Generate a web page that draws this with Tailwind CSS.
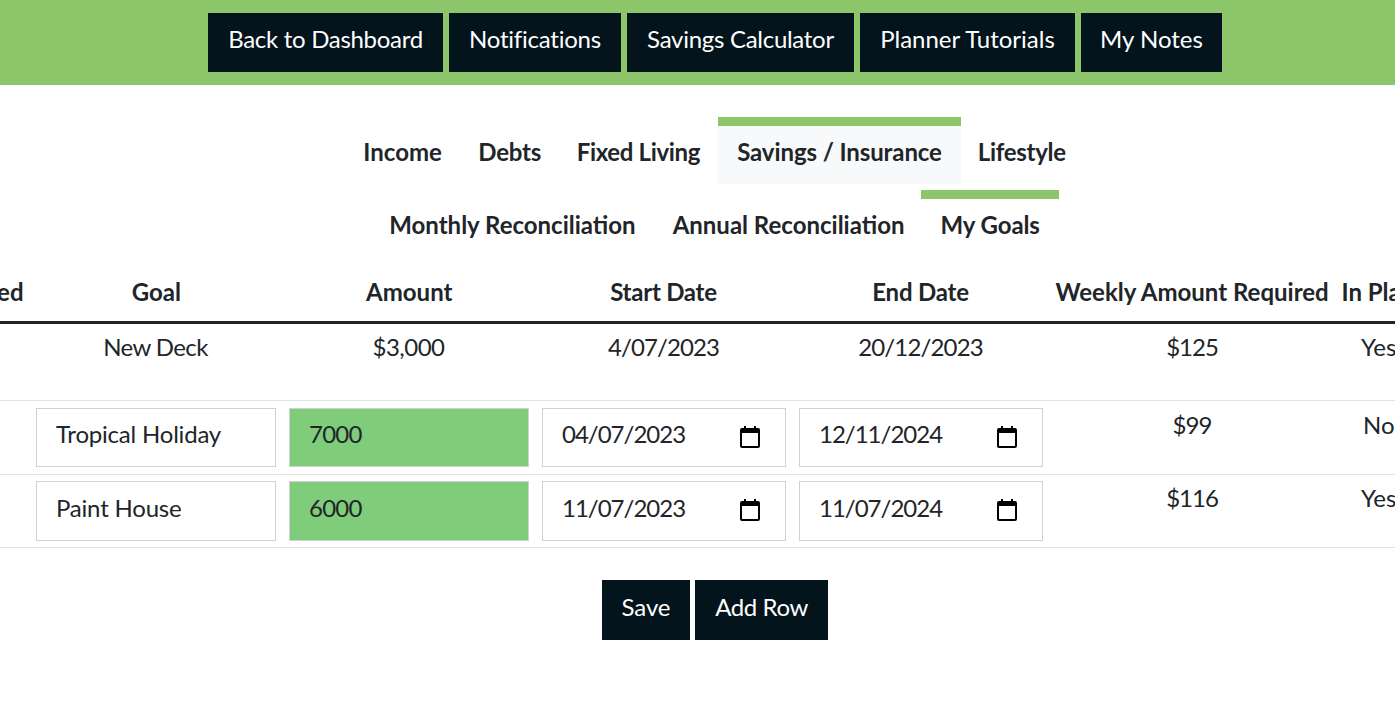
<!DOCTYPE html>
<html lang="en">
<head>
<meta charset="utf-8">
<title>My Goals</title>
<script src="https://cdn.jsdelivr.net/npm/@tailwindcss/browser@4"></script>
</head>
<body class="bg-white text-[#212529] font-['Lato',sans-serif] text-[24px] leading-[36px] overflow-hidden h-[706px] [font-variant-ligatures:common-ligatures]">
<nav class="bg-[#8cc56a] h-[85px] pt-[13px] pl-[35px] flex justify-center items-start gap-[6px]">
  <a class="bg-[#03141c] text-white h-[59px] w-[235px] pb-[7px] flex items-center justify-center tracking-[-0.3px]">Back to Dashboard</a>
  <a class="bg-[#03141c] text-white h-[59px] w-[172px] pb-[7px] flex items-center justify-center tracking-[-0.23px]">Notifications</a>
  <a class="bg-[#03141c] text-white h-[59px] w-[227px] pb-[7px] flex items-center justify-center tracking-[-0.28px]">Savings Calculator</a>
  <a class="bg-[#03141c] text-white h-[59px] w-[215px] pb-[7px] flex items-center justify-center">Planner Tutorials</a>
  <a class="bg-[#03141c] text-white h-[59px] w-[141px] pb-[7px] flex items-center justify-center">My Notes</a>
</nav>
<div class="pt-[32px] pl-[35px] flex flex-col gap-[6px] font-bold">
  <div class="flex justify-center">
    <a class="h-[67px] pl-[18.5px] pr-[18px] border-t-[9px] border-transparent flex items-center pb-[7px]">Income</a>
    <a class="h-[67px] pl-[18.5px] pr-[17px] border-t-[9px] border-transparent flex items-center pb-[7px] tracking-[-0.2px]">Debts</a>
    <a class="h-[67px] pl-[18.5px] pr-[18px] border-t-[9px] border-transparent flex items-center pb-[7px] tracking-[-0.33px]">Fixed Living</a>
    <a class="h-[67px] px-[19px] border-t-[9px] border-[#8cc56a] bg-[#f8f9fa] flex items-center pb-[7px] tracking-[-0.1px]">Savings / Insurance</a>
    <a class="h-[67px] pl-[17px] pr-[19.5px] border-t-[9px] border-transparent flex items-center pb-[7px] tracking-[-0.3px]">Lifestyle</a>
  </div>
  <div class="flex justify-center">
    <a class="h-[67px] px-[18.5px] border-t-[9px] border-transparent flex items-center pb-[7px]">Monthly Reconciliation</a>
    <a class="h-[67px] pl-[18.5px] pr-[16.5px] border-t-[9px] border-transparent flex items-center pb-[7px]">Annual Reconciliation</a>
    <a class="h-[67px] px-[19.5px] border-t-[9px] border-[#8cc56a] flex items-center pb-[7px] tracking-[-0.1px]">My Goals</a>
  </div>
</div>
<div class="overflow-hidden mt-[8px]">
  <table class="table-fixed border-collapse w-[1700px] ml-[-171px] text-center">
    <colgroup>
      <col class="w-[200px]"><col class="w-[253px]"><col class="w-[253px]"><col class="w-[257px]"><col class="w-[257px]"><col class="w-[286px]"><col class="w-[194px]">
    </colgroup>
    <thead>
      <tr class="h-[57px] border-b-[3px] border-[#212529] font-bold">
        <th class="whitespace-nowrap text-right pl-[6.5px] pr-[5.5px] pb-[2px]">Goal Achieved</th>
        <th class="pl-[8px] pr-[6.5px] pb-[2px]">Goal</th>
        <th class="pl-[8px] pr-[6.5px] pb-[2px]">Amount</th>
        <th class="px-[6.5px] pb-[2px] tracking-[-0.25px]">Start Date</th>
        <th class="px-[6.5px] pb-[2px] tracking-[-0.2px]">End Date</th>
        <th class="whitespace-nowrap px-[6.5px] pb-[2px]">Weekly Amount Required</th>
        <th class="whitespace-nowrap text-left px-[6.5px] pb-[2px]">In Plan</th>
      </tr>
    </thead>
    <tbody>
      <tr class="h-[78px] border-b border-[#dee2e6] align-top">
        <td class="pt-[5px]"></td>
        <td class="pt-[5px] tracking-[-0.6px]">New Deck</td>
        <td class="pt-[5px] tracking-[-0.5px]">$3,000</td>
        <td class="pt-[5px] tracking-[-0.9px]">4/07/2023</td>
        <td class="pt-[5px] tracking-[-0.85px]">20/12/2023</td>
        <td class="pt-[5px] tracking-[-1px]">$125</td>
        <td class="pt-[5px] text-left pl-[26px]">Yes</td>
      </tr>
      <tr class="h-[74px] border-b border-[#dee2e6] align-top">
        <td></td>
        <td class="px-[6.5px] pt-[7px]"><input class="w-full h-[59px] border border-[#cfd2d4] pl-[19.500px] pr-[19px] pb-[8px] bg-white text-[#212529] tracking-[-0.2px]" value="Tropical Holiday"></td>
        <td class="px-[6.5px] pt-[7px]"><input class="w-full h-[59px] border border-[#cfd2d4] pl-[19.500px] pr-[19px] pb-[8px] bg-[#7fcc7a] text-[#212529] tracking-[-0.75px]" value="7000"></td>
        <td class="px-[6.5px] pt-[7px]">
          <div class="h-[59px] border border-[#cfd2d4] pl-[19.500px] pr-[25px] pb-[6px] flex items-center justify-between">
            <span class="tracking-[-1px]">04/07/2023</span>
            <svg class="w-[20px] h-[22px] mt-[5px]" viewBox="0 0 20 22"><path fill="#000" fill-rule="evenodd" d="M4 0h2v2h8V0h2v2h2a2 2 0 0 1 2 2v16a2 2 0 0 1-2 2H2a2 2 0 0 1-2-2V4a2 2 0 0 1 2-2h2V0zM2 7v12.500a.5.5 0 0 0 .5.5h15a.5.5 0 0 0 .5-.5V7H2z"/></svg>
          </div>
        </td>
        <td class="px-[6.5px] pt-[7px]">
          <div class="h-[59px] border border-[#cfd2d4] pl-[19.500px] pr-[25px] pb-[6px] flex items-center justify-between">
            <span class="tracking-[-1px]">12/11/2024</span>
            <svg class="w-[20px] h-[22px] mt-[5px]" viewBox="0 0 20 22"><path fill="#000" fill-rule="evenodd" d="M4 0h2v2h8V0h2v2h2a2 2 0 0 1 2 2v16a2 2 0 0 1-2 2H2a2 2 0 0 1-2-2V4a2 2 0 0 1 2-2h2V0zM2 7v12.500a.5.5 0 0 0 .5.5h15a.5.5 0 0 0 .5-.5V7H2z"/></svg>
          </div>
        </td>
        <td class="pt-[6px] tracking-[-1px]">$99</td>
        <td class="pt-[6px] text-left pl-[28px]">No</td>
      </tr>
      <tr class="h-[73px] border-b border-[#dee2e6] align-top">
        <td></td>
        <td class="px-[6.5px] pt-[6px]"><input class="w-full h-[60px] border border-[#cfd2d4] pl-[19.500px] pr-[19px] pb-[6px] bg-white text-[#212529] tracking-[-0.2px]" value="Paint House"></td>
        <td class="px-[6.5px] pt-[6px]"><input class="w-full h-[60px] border border-[#cfd2d4] pl-[19.500px] pr-[19px] pb-[6px] bg-[#7fcc7a] text-[#212529] tracking-[-0.75px]" value="6000"></td>
        <td class="px-[6.5px] pt-[6px]">
          <div class="h-[60px] border border-[#cfd2d4] pl-[19.500px] pr-[25px] pb-[6px] flex items-center justify-between">
            <span class="tracking-[-1px]">11/07/2023</span>
            <svg class="w-[20px] h-[22px] mt-[5px]" viewBox="0 0 20 22"><path fill="#000" fill-rule="evenodd" d="M4 0h2v2h8V0h2v2h2a2 2 0 0 1 2 2v16a2 2 0 0 1-2 2H2a2 2 0 0 1-2-2V4a2 2 0 0 1 2-2h2V0zM2 7v12.500a.5.5 0 0 0 .5.5h15a.5.5 0 0 0 .5-.5V7H2z"/></svg>
          </div>
        </td>
        <td class="px-[6.5px] pt-[6px]">
          <div class="h-[60px] border border-[#cfd2d4] pl-[19.500px] pr-[25px] pb-[6px] flex items-center justify-between">
            <span class="tracking-[-1px]">11/07/2024</span>
            <svg class="w-[20px] h-[22px] mt-[5px]" viewBox="0 0 20 22"><path fill="#000" fill-rule="evenodd" d="M4 0h2v2h8V0h2v2h2a2 2 0 0 1 2 2v16a2 2 0 0 1-2 2H2a2 2 0 0 1-2-2V4a2 2 0 0 1 2-2h2V0zM2 7v12.500a.5.5 0 0 0 .5.5h15a.5.5 0 0 0 .5-.5V7H2z"/></svg>
          </div>
        </td>
        <td class="pt-[5px] tracking-[-1px]">$116</td>
        <td class="pt-[5px] text-left pl-[26px]">Yes</td>
      </tr>
    </tbody>
  </table>
</div>
<div class="mt-[32px] pl-[35px] flex justify-center gap-[5px]">
  <button class="bg-[#03141c] text-white h-[60px] w-[88px] pb-[6px] tracking-[-0.1px]">Save</button>
  <button class="bg-[#03141c] text-white h-[60px] w-[133px] pb-[6px] tracking-[-0.4px]">Add Row</button>
</div>
</body>
</html>
